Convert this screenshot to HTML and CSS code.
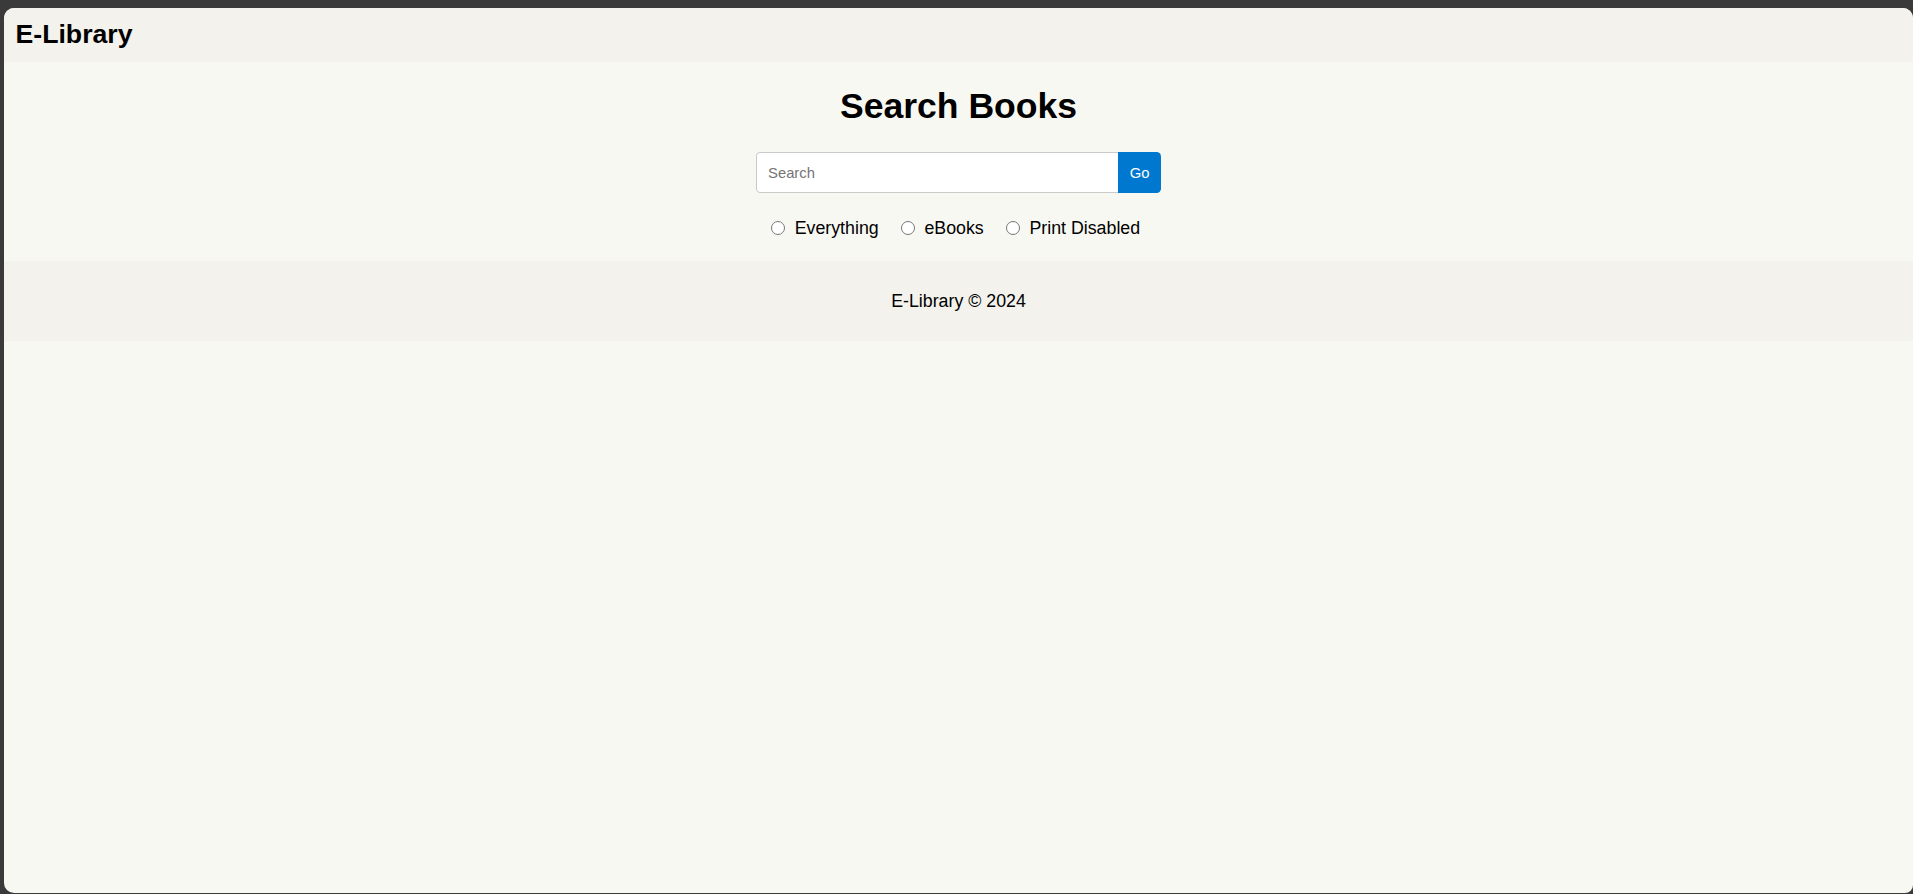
FILE: index.html
```html
<!DOCTYPE html>
<html lang="en">
<head>
<meta charset="utf-8">
<title>E-Library</title>
<link rel="stylesheet" href="styles.css">
</head>
<body>
<div class="window">
  <header class="site-header">
    <div class="brand">E-Library</div>
  </header>
  <main class="main">
    <h1 class="title">Search Books</h1>
    <form class="search" onsubmit="return false">
      <input class="search-input" type="text" placeholder="Search">
      <button class="search-btn" type="submit">Go</button>
    </form>
    <div class="options">
      <label class="option"><input class="radio" type="radio" name="scope"><span>Everything</span></label>
      <label class="option"><input class="radio" type="radio" name="scope"><span>eBooks</span></label>
      <label class="option"><input class="radio" type="radio" name="scope"><span>Print Disabled</span></label>
    </div>
  </main>
  <footer class="site-footer">E-Library © 2024</footer>
</div>
</body>
</html>
```
FILE: styles.css
```css
html, body {
  margin: 0;
  height: 100%;
}
body {
  background: #3a3a3a;
  padding: 8px 0 1px 4px;
  box-sizing: border-box;
  font-family: "Liberation Sans", Arial, sans-serif;
  color: #000;
}
.window {
  height: 100%;
  background: #f8f8f3;
  border-radius: 10px 10px 8px 10px;
  overflow: hidden;
}
.site-header {
  background: #f3f2ec;
  height: 54px;
  box-sizing: border-box;
  padding: 10.5px 11px 0 11.5px;
}
.brand {
  font-size: 26.67px;
  font-weight: bold;
  line-height: 30.6px;
}
.main {
  display: flex;
  flex-direction: column;
  align-items: center;
  padding: 24px 0 0;
  height: 199px;
  box-sizing: border-box;
}
.title {
  margin: 0 0 25.4px;
  font-size: 35.56px;
  line-height: 41px;
  font-weight: bold;
}
.search {
  display: flex;
  height: 40.4px;
  margin: 0;
}
.search-input {
  box-sizing: border-box;
  width: 362px;
  height: 100%;
  border: 1px solid #cacaca;
  border-right: none;
  border-radius: 4.4px 0 0 4.4px;
  background: #fff;
  padding: 0 11px;
  font-family: "Liberation Sans", Arial, sans-serif;
  font-size: 14.8px;
  outline: none;
  margin: 0;
}
.search-input::placeholder {
  color: #757575;
}
.search-btn {
  height: 100%;
  border: none;
  border-radius: 0 4.4px 4.4px 0;
  background: #0078d0;
  color: #fff;
  padding: 0 11.6px;
  font-family: "Liberation Sans", Arial, sans-serif;
  font-size: 14.8px;
  margin: 0;
  cursor: pointer;
}
.options {
  display: flex;
  justify-content: center;
  margin-top: 25px;
  font-size: 17.78px;
  line-height: 20.4px;
}
.option {
  display: flex;
  align-items: center;
  margin-right: 11.5px;
}
.option + .option {
  margin-left: 5px;
}
.radio {
  width: 14.5px;
  height: 14.5px;
  margin: 0 9.3px 0 5.5px;
}
.site-footer {
  background: #f3f2ec;
  height: 80px;
  box-sizing: border-box;
  padding-top: 29.5px;
  text-align: center;
  font-size: 17.78px;
  line-height: 20.4px;
}
```
